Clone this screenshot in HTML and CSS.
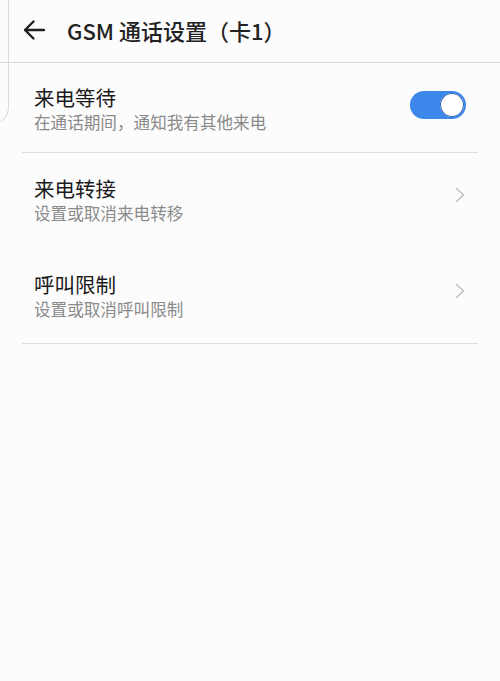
FILE: index.html
```html
<!DOCTYPE html>
<html lang="zh-CN">
<head>
<meta charset="utf-8">
<title>GSM 通话设置（卡1）</title>
<link rel="stylesheet" href="styles.css">
</head>
<body>
<div class="edge"></div>
<header class="bar">
  <svg class="back" width="24" height="24" viewBox="0 0 24 24" aria-hidden="true">
    <path d="M22 12H3M11.5 3.5L3 12l8.5 8.5" fill="none" stroke="#1f1f1f" stroke-width="2.4" stroke-linecap="round" stroke-linejoin="round"/>
  </svg>
  <h1 class="title">GSM 通话设置（卡1）</h1>
</header>
<main class="list">
  <div class="item first">
    <div class="texts">
      <div class="name">来电等待</div>
      <div class="desc">在通话期间，通知我有其他来电</div>
    </div>
    <div class="toggle"><span class="knob"></span></div>
  </div>
  <div class="item">
    <div class="texts">
      <div class="name">来电转接</div>
      <div class="desc">设置或取消来电转移</div>
    </div>
    <svg class="chev" width="10" height="16" viewBox="0 0 10 16" aria-hidden="true">
      <path d="M1.5 1.5L8.5 8l-7 6.5" fill="none" stroke="#bdbdbd" stroke-width="1.4" stroke-linecap="round" stroke-linejoin="round"/>
    </svg>
  </div>
  <div class="item last">
    <div class="texts">
      <div class="name">呼叫限制</div>
      <div class="desc">设置或取消呼叫限制</div>
    </div>
    <svg class="chev" width="10" height="16" viewBox="0 0 10 16" aria-hidden="true">
      <path d="M1.5 1.5L8.5 8l-7 6.5" fill="none" stroke="#bdbdbd" stroke-width="1.4" stroke-linecap="round" stroke-linejoin="round"/>
    </svg>
  </div>
</main>
</body>
</html>
```

FILE: styles.css
```css
html, body {
  margin: 0;
  padding: 0;
}
body {
  background: #fcfcfc;
  font-family: "Noto Sans CJK SC", "Noto Sans", sans-serif;
  color: #1a1a1a;
  width: 500px;
  min-height: 681px;
  position: relative;
  overflow: hidden;
}
.edge {
  position: absolute;
  left: -12px;
  top: -2px;
  width: 20px;
  height: 126px;
  border-right: 1px solid #dadada;
  border-bottom: 1px solid #e4e4e4;
  border-bottom-right-radius: 18px;
  pointer-events: none;
}
.bar {
  display: flex;
  align-items: center;
  padding-left: 22px;
  border-bottom: 1px solid #d9d9d9;
  box-sizing: border-box;
  height: 63px;
}
.back {
  flex: none;
  margin-top: -3px;
}
.title {
  margin: -3px 0 0 21px;
  font-size: 22px;
  font-weight: 500;
  line-height: 28px;
  color: #222;
}
.list {
  margin: 0 22px;
}
.item {
  display: flex;
  align-items: center;
  padding: 22px 12px 23px 12px;
}
.item.first {
  padding-top: 21px;
  padding-bottom: 18px;
  border-bottom: 1px solid #dddddd;
}
.item.last {
  padding-top: 23px;
  padding-bottom: 22px;
  border-bottom: 1px solid #dddddd;
}
.texts {
  flex: 1;
}
.name {
  font-size: 20.5px;
  line-height: 26px;
  color: #1a1a1a;
}
.desc {
  font-size: 16.6px;
  line-height: 24px;
  color: #8a8a8a;
}
.toggle {
  flex: none;
  width: 56px;
  height: 28px;
  border-radius: 14px;
  background: #3d86ea;
  display: flex;
  align-items: center;
  justify-content: flex-end;
  padding: 0 2px;
  box-sizing: border-box;
  margin-top: -8px;
}
.knob {
  width: 24px;
  height: 24px;
  border-radius: 50%;
  background: #fff;
  box-shadow: 0 0 0 1px #2f67b8 inset;
}
.chev {
  flex: none;
  margin-right: 1px;
  margin-top: -10px;
}
```
